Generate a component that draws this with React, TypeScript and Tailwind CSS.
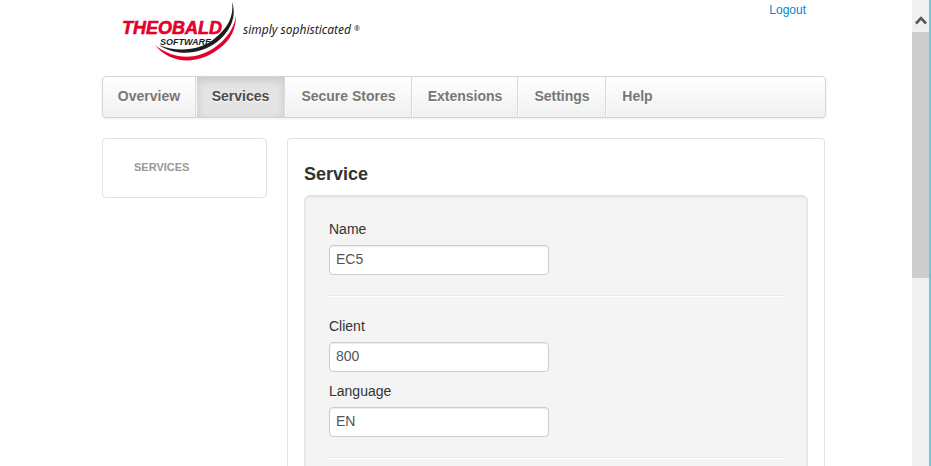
import { ReactNode } from "react";

function Logo() {
  return (
    <svg
      viewBox="0 0 262 66"
      className="block h-[66px] w-[262px]"
      role="img"
      aria-label="Theobald Software, simply sophisticated"
    >
      <path
        d="M130 2 C135 16 129 31 115 42 C101 53 76 58 57 45 C76 53 99 50 112 39 C126 28 132 16 130 2Z"
        fill="#1d1d1f"
      />
      <path
        d="M134 16 C134 28 129 40 118 48 C98 64 70 66 53 45 C70 59 93 61 112 48 C125 39 132 28 134 16Z"
        fill="#e4002b"
      />
      <text
        x="20"
        y="34"
        fontSize="18"
        fill="#e4002b"
        stroke="#e4002b"
        strokeWidth="0.6"
        className="font-['Liberation_Sans',Arial,sans-serif] font-bold italic"
      >
        THEOBALD
      </text>
      <text
        x="58"
        y="45"
        fontSize="9"
        fill="#1d1d1f"
        className="font-['Liberation_Sans',Arial,sans-serif] font-bold italic"
      >
        SOFTWARE
      </text>
      <text
        x="141"
        y="34"
        fontSize="12"
        fill="#1d1d1f"
        className="font-['Noto_Sans',sans-serif] italic"
      >
        simply sophisticated
      </text>
      <text x="252" y="31" fontSize="7" fill="#1d1d1f" className="font-['Noto_Sans',sans-serif]">
        ®
      </text>
    </svg>
  );
}

const navItems = [
  { label: "Overview", width: "w-[93px]" },
  { label: "Services", width: "w-[89px]" },
  { label: "Secure Stores", width: "w-[127px]" },
  { label: "Extensions", width: "w-[106px]" },
  { label: "Settings", width: "w-[88px]" },
  { label: "Help", width: "w-[62px]" },
];

function NavBar({ active }: { active: string }) {
  return (
    <nav className="flex h-[42px] overflow-hidden rounded border border-[#d4d4d4] bg-linear-to-b from-white to-[#f0f0f0] shadow-[0_1px_3px_rgba(0,0,0,0.07)]">
      {navItems.map(({ label, width }) => (
        <a
          key={label}
          href="#"
          aria-current={label === active ? "page" : undefined}
          className={
            "shrink-0 border-r border-l border-r-[#d9d9d9] border-l-[#fafafa] pt-[9px] text-center font-bold whitespace-nowrap first:border-l-0 last:border-r-0 [text-shadow:0_1px_0_#fff] " +
            width +
            (label === active
              ? " bg-[#e4e4e4] text-[#4c4c4c] shadow-[inset_0_3px_8px_rgba(0,0,0,0.13)]"
              : " text-[#777]")
          }
        >
          {label}
        </a>
      ))}
    </nav>
  );
}

function Field({ id, label, value }: { id: string; label: string; value: string }) {
  return (
    <div className="mb-2.5 last:mb-0">
      <label htmlFor={id} className="mb-[7px] block leading-[18px] text-[#333]">
        {label}
      </label>
      <input
        id={id}
        type="text"
        defaultValue={value}
        className="block h-[30px] w-[220px] rounded border border-[#ccc] bg-white px-1.5 pt-1 pb-1.5 text-[#555] shadow-[inset_0_1px_1px_rgba(0,0,0,0.075)] outline-none"
      />
    </div>
  );
}

function Group({ children }: { children: ReactNode }) {
  return (
    <>
      <div>{children}</div>
      <hr className="my-5 h-0.5 border-t border-b border-t-[#eaeaea] border-b-white" />
    </>
  );
}

function ScrollBar() {
  return (
    <div className="flex w-[19px] shrink-0 flex-col border-r-2 border-[#66cbea] bg-[#f0f0f0]" aria-hidden="true">
      <div className="flex h-8 shrink-0 justify-center pt-[15px]">
        <svg viewBox="0 0 12 10" className="h-2.5 w-3">
          <path d="M1 8.5 6 3.2 11 8.5" fill="none" stroke="#555" strokeWidth="2.6" />
        </svg>
      </div>
      <div className="h-[246px] shrink-0 bg-[#cdcdcd]" />
    </div>
  );
}

export default function App() {
  return (
    <div className="flex h-screen overflow-hidden bg-white font-['Liberation_Sans',Arial,sans-serif] text-sm leading-5 text-[#333]">
      <main className="min-w-0 flex-1 pl-4">
        <div className="mx-auto max-w-[724px]">
          <header className="flex h-[76px] items-start justify-between pr-5">
            <Logo />
            <a href="#" className="text-xs leading-5 text-[#0088cc]">
              Logout
            </a>
          </header>
          <NavBar active="Services" />
          <div className="mt-5 flex items-start gap-5 pr-px">
            <aside className="w-[165px] shrink-0 rounded border border-[#e1e1e8] px-[31px] pt-[19px] pb-[21px]">
              <h3 className="text-[11px] leading-[18px] font-bold text-[#999] uppercase [text-shadow:0_1px_0_rgba(255,255,255,0.5)]">
                Services
              </h3>
            </aside>
            <section className="min-w-0 flex-1 rounded border border-[#e1e1e8] p-4">
              <h2 className="mt-1 mb-1.5 text-lg leading-[30px] font-bold">Service</h2>
              <form className="min-h-[400px] rounded-md border border-[#e3e3e3] bg-[#f4f4f4] p-6 shadow-[inset_0_1px_2px_rgba(0,0,0,0.1)]">
                <Group>
                  <Field id="name" label="Name" value="EC5" />
                </Group>
                <Group>
                  <Field id="client" label="Client" value="800" />
                  <Field id="language" label="Language" value="EN" />
                </Group>
              </form>
            </section>
          </div>
        </div>
      </main>
      <ScrollBar />
    </div>
  );
}
